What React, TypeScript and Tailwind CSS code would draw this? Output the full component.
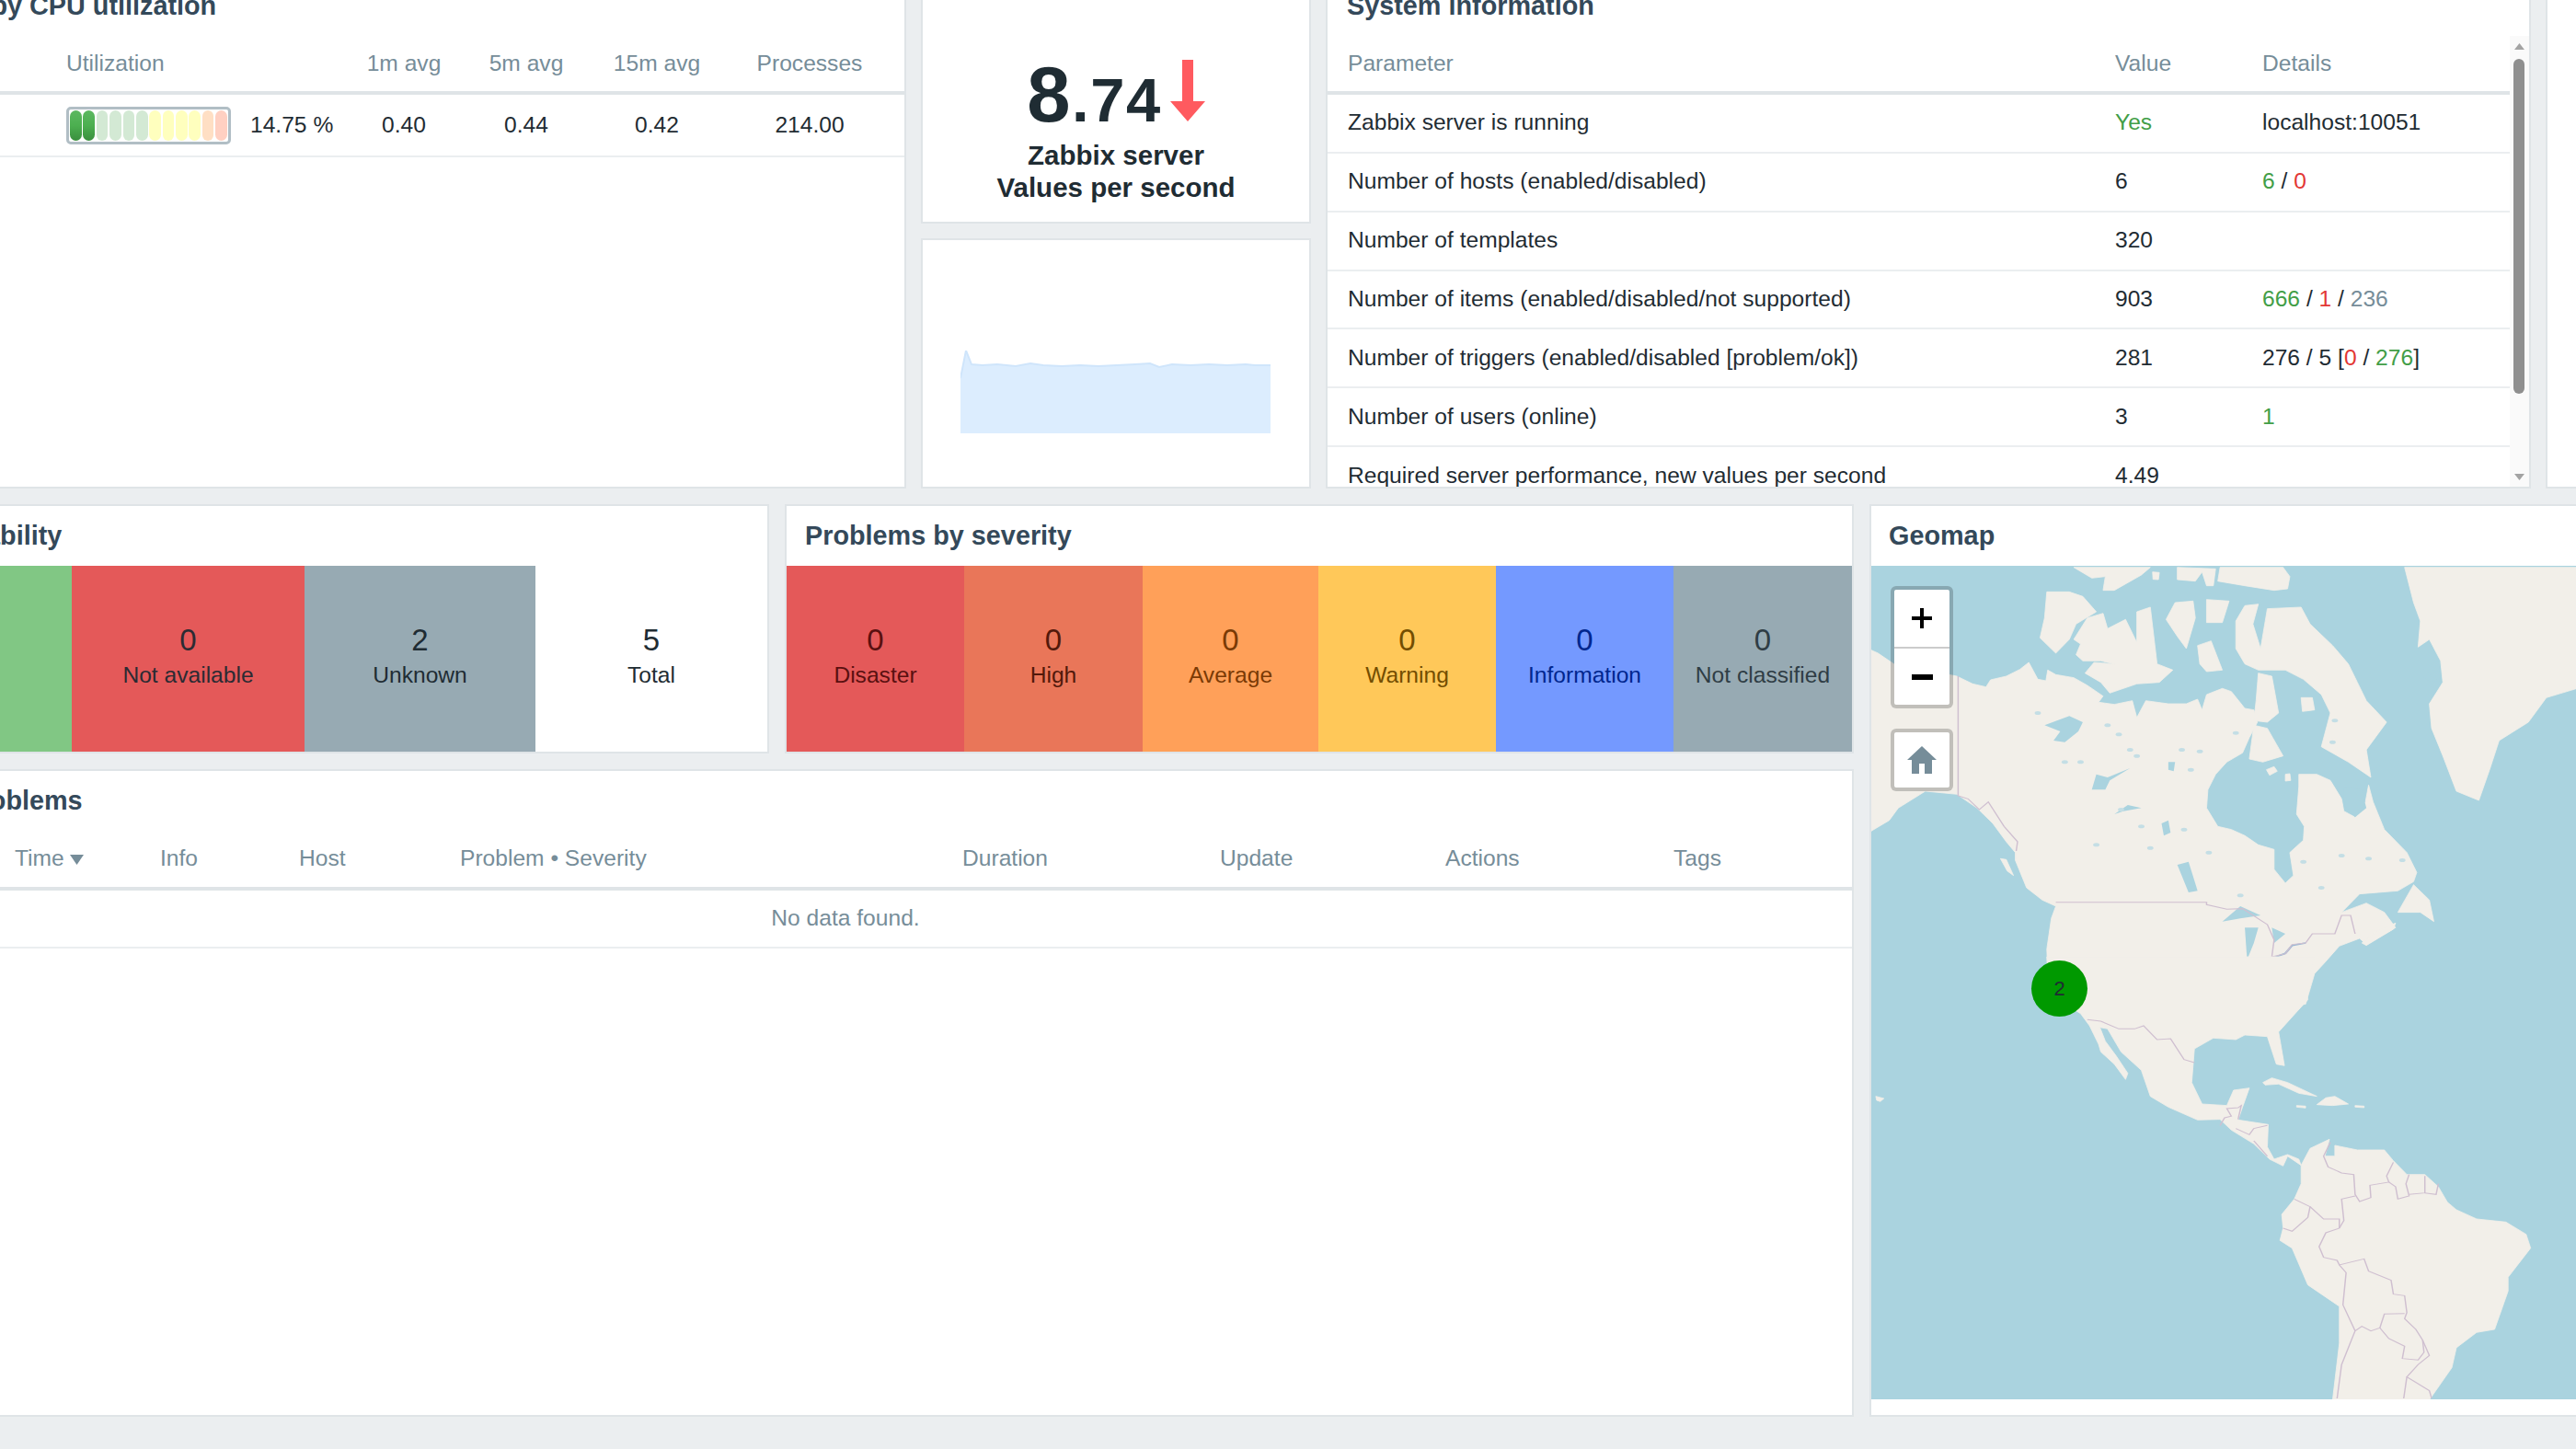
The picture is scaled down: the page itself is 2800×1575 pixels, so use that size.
const font = "font-['Liberation_Sans','Arial',sans-serif]";

function Panel({ className = "", children }: { className?: string; children?: React.ReactNode }) {
  return <div className={`bg-white border-2 border-[#dfe4e7] shrink-0 ${className}`}>{children}</div>;
}

function Title({ children, className = "pl-[20px]" }: { children: React.ReactNode; className?: string }) {
  return (
    <div className={`h-[65px] flex items-center text-[28.8px] font-bold text-[#34495a] whitespace-nowrap ${className}`}>
      {children}
    </div>
  );
}

const barColors = [
  "bg-linear-to-b from-[#5cb860] via-[#4caf50] to-[#3a8f3e]",
  "bg-linear-to-b from-[#5cb860] via-[#4caf50] to-[#3a8f3e]",
  "bg-[#d3e9d4]", "bg-[#d3e9d4]", "bg-[#d3e9d4]", "bg-[#d3e9d4]",
  "bg-[#ffffbe]", "bg-[#ffffbe]", "bg-[#ffffbe]", "bg-[#ffffbe]", "bg-[#ffdfc4]", "bg-[#ffd0c2]",
];

function TopHosts() {
  return (
    <Panel className="w-[1165px] h-full overflow-hidden">
      <Title className="pl-[25px]">Top hosts by CPU utilization</Title>
      <div className="h-[64px] flex items-center text-[#768d99] text-[24.6px] border-b-4 border-[#dfe4e7]">
        <div className="w-[250px] shrink-0" />
        <div className="w-[318px] shrink-0">Utilization</div>
        <div className="w-[98px] shrink-0 text-center">1m avg</div>
        <div className="w-[168px] shrink-0 text-center">5m avg</div>
        <div className="w-[116px] shrink-0 text-center">15m avg</div>
        <div className="w-[216px] shrink-0 text-center">Processes</div>
      </div>
      <div className="h-[68px] flex items-center text-[#1f2c33] text-[24.6px] border-b-2 border-[#ebeef0]">
        <div className="w-[250px] shrink-0" />
        <div className="w-[318px] shrink-0 flex items-center">
          <div className="w-[179px] h-[41px] border-[3px] border-[#b1bec5] rounded-[5px] flex items-center gap-[1.7px] pl-[1px]">
            {barColors.map((c, i) => (
              <div key={i} className={`w-[12.7px] h-[33px] rounded-full ${c}`} />
            ))}
          </div>
          <span className="ml-[21px] whitespace-nowrap">14.75 %</span>
        </div>
        <div className="w-[98px] shrink-0 text-center">0.40</div>
        <div className="w-[168px] shrink-0 text-center">0.44</div>
        <div className="w-[116px] shrink-0 text-center">0.42</div>
        <div className="w-[216px] shrink-0 text-center">214.00</div>
      </div>
    </Panel>
  );
}

function ValueCol() {
  return (
    <div className="w-[424px] h-full shrink-0 flex flex-col gap-[16px]">
      <Panel className="h-[271px] flex flex-col justify-end items-center pb-[20px] text-[#1f2c33]">
        <div className="flex items-baseline font-bold leading-none mb-[6px] tracking-[1.5px]">
          <span className="text-[85px]">8</span>
          <span className="text-[67px]">.74</span>
          <svg className="ml-[9px] self-end mb-[13px]" width="38" height="67" viewBox="0 0 38 67">
            <path d="M13 0H25V45H38L19 67L0 45H13Z" fill="#ff5a5f" />
          </svg>
        </div>
        <div className="text-[29.5px] font-bold leading-[35px] text-center">
          Zabbix server
          <br />
          Values per second
        </div>
      </Panel>
      <Panel className="flex-1 flex items-end justify-center pb-[58px]">
        <svg className="ml-[-1px]" width="337" height="90" viewBox="0 0 337 90">
          <path
            d="M0 30L6 0L12 15L24 16L40 15L50 16L60 17L76 14L90 16L110 17L130 16L150 17L170 16L190 15L206 14L216 18L230 15L250 16L270 15L290 16L310 15L320 16L337 16V90H0Z"
            fill="#dcedfe"
          />
          <path
            d="M0 30L6 0L12 15L24 16L40 15L50 16L60 17L76 14L90 16L110 17L130 16L150 17L170 16L190 15L206 14L216 18L230 15L250 16L270 15L290 16L310 15L320 16L337 16"
            fill="none"
            stroke="#cfe5fb"
            strokeWidth="2"
          />
        </svg>
      </Panel>
    </div>
  );
}

const sysRows: { p: string; v: React.ReactNode; d?: React.ReactNode }[] = [
  { p: "Zabbix server is running", v: <span className="text-[#429e47]">Yes</span>, d: "localhost:10051" },
  {
    p: "Number of hosts (enabled/disabled)",
    v: "6",
    d: (
      <>
        <span className="text-[#429e47]">6</span> / <span className="text-[#e33734]">0</span>
      </>
    ),
  },
  { p: "Number of templates", v: "320" },
  {
    p: "Number of items (enabled/disabled/not supported)",
    v: "903",
    d: (
      <>
        <span className="text-[#429e47]">666</span> / <span className="text-[#e33734]">1</span> /{" "}
        <span className="text-[#768d99]">236</span>
      </>
    ),
  },
  {
    p: "Number of triggers (enabled/disabled [problem/ok])",
    v: "281",
    d: (
      <>
        276 / 5 [<span className="text-[#e33734]">0</span> / <span className="text-[#429e47]">276</span>]
      </>
    ),
  },
  { p: "Number of users (online)", v: "3", d: <span className="text-[#429e47]">1</span> },
  { p: "Required server performance, new values per second", v: "4.49" },
];

function SystemInfo() {
  return (
    <Panel className="w-[1310px] h-full overflow-hidden flex flex-col">
      <Title className="pl-[21px]">System information</Title>
      <div className="flex-1 flex min-h-0">
        <div className="flex-1 overflow-hidden">
          <div className="h-[64px] grid grid-cols-[834px_160px_1fr] items-center pl-[22px] text-[#768d99] text-[24.6px] border-b-4 border-[#dfe4e7]">
            <div>Parameter</div>
            <div>Value</div>
            <div>Details</div>
          </div>
          {sysRows.map((r) => (
            <div
              key={r.p}
              className="h-[63.85px] grid grid-cols-[834px_160px_1fr] items-center pl-[22px] text-[#1f2c33] text-[24.6px] whitespace-nowrap border-b-2 border-[#ebeef0]"
            >
              <div>{r.p}</div>
              <div>{r.v}</div>
              <div>{r.d}</div>
            </div>
          ))}
        </div>
        <div className="w-[21px] bg-[#fafafa] flex flex-col items-center pr-[1px]">
          <svg className="mt-[8px]" width="11" height="7" viewBox="0 0 11 7">
            <path d="M5.5 0L11 7H0Z" fill="#a3a3a3" />
          </svg>
          <div className="w-[12px] h-[364px] mt-[10px] rounded-full bg-[#8f8f8f]" />
          <svg className="mt-[87px]" width="11" height="7" viewBox="0 0 11 7">
            <path d="M5.5 7L11 0H0Z" fill="#a3a3a3" />
          </svg>
        </div>
      </div>
    </Panel>
  );
}

function Cell({ n, label, cls, txt }: { n: string; label: string; cls: string; txt: string }) {
  return (
    <div className={`h-full flex flex-col items-center justify-center whitespace-nowrap ${cls} ${txt}`}>
      <div className="text-[33px] leading-[35px]">{n}</div>
      <div className="text-[24.6px] leading-[41px]">{label}</div>
    </div>
  );
}

function Availability() {
  return (
    <Panel className="w-[1016px] h-[271px] overflow-hidden flex flex-col">
      <Title className="pl-[26px]">Host availability</Title>
      <div className="h-[202px] grid grid-cols-[256px_253px_251px_1fr]">
        <Cell n="3" label="Available" cls="bg-[#81c784]" txt="text-[#1f6a3a]" />
        <Cell n="0" label="Not available" cls="bg-[#e45959]" txt="text-[#2b2b33]" />
        <Cell n="2" label="Unknown" cls="bg-[#97aab3]" txt="text-[#1f2c33]" />
        <Cell n="5" label="Total" cls="bg-white" txt="text-[#1f2c33]" />
      </div>
    </Panel>
  );
}

function Severity() {
  return (
    <Panel className="w-[1162px] h-[271px] overflow-hidden flex flex-col">
      <Title>Problems by severity</Title>
      <div className="h-[202px] grid grid-cols-[193px_194px_191px_193px_193px_1fr]">
        <Cell n="0" label="Disaster" cls="bg-[#e45959]" txt="text-[#5a1010]" />
        <Cell n="0" label="High" cls="bg-[#e97659]" txt="text-[#52190b]" />
        <Cell n="0" label="Average" cls="bg-[#ffa059]" txt="text-[#7a3a05]" />
        <Cell n="0" label="Warning" cls="bg-[#ffc859]" txt="text-[#734d00]" />
        <Cell n="0" label="Information" cls="bg-[#7499ff]" txt="text-[#00268e]" />
        <Cell n="0" label="Not classified" cls="bg-[#97aab3]" txt="text-[#2f3d45]" />
      </div>
    </Panel>
  );
}

function Problems() {
  return (
    <Panel className="flex-1 overflow-hidden">
      <Title className="pl-[26px]">Current problems</Title>
      <div className="h-[65px] flex items-center text-[#768d99] text-[24.6px] whitespace-nowrap border-b-4 border-[#dfe4e7]">
        <div className="w-[194px] shrink-0" />
        <div className="w-[158px] shrink-0 flex items-center">
          Time
          <svg className="ml-[6px] mt-[3px]" width="15" height="11" viewBox="0 0 15 11">
            <path d="M0 0H15L7.5 11Z" fill="#768d99" />
          </svg>
        </div>
        <div className="w-[151px] shrink-0">Info</div>
        <div className="w-[175px] shrink-0">Host</div>
        <div className="w-[546px] shrink-0">Problem • Severity</div>
        <div className="w-[280px] shrink-0">Duration</div>
        <div className="w-[245px] shrink-0">Update</div>
        <div className="w-[248px] shrink-0">Actions</div>
        <div>Tags</div>
      </div>
      <div className="h-[63px] flex items-center justify-center pl-[3px] text-[#768d99] text-[24.6px] border-b-2 border-[#ebeef0]">
        No data found.
      </div>
    </Panel>
  );
}

const north = [
  "M0 275L15 285L40 310L50 320L190 360L225 385L255 395L265 372L300 360L330 338L350 315L370 370L388 375L392 340L410 355L450 365L480 390L515 425L505 445L540 452L580 440L590 495L610 440L660 450L700 450L725 435L735 470L745 420L780 400L800 410L830 465L850 470L858 510L840 560L825 610L790 640L765 680L748 730L745 790L770 850L800 860L830 880L860 910L895 925L895 990L920 1035L938 1010L930 935L960 895L962 850L945 810L950 720L950 680L990 680L1020 700L1045 760L1050 800L1075 820L1098 770L1105 715L1115 770L1140 860L1190 935L1212 1000L1205 1030L1170 1060L1085 1070L1045 1130L1100 1100L1140 1130L1165 1180L1100 1235L1085 1215L1040 1240L1010 1290L985 1330L965 1430L395 1430L390 1250L400 1150L410 1110L380 1090L345 1050L320 960L320 935L300 900L270 840L235 790L190 745L120 735L60 790L40 830L0 865Z",
  "M450 5L490 40L520 35L515 80L540 80L600 30L620 5Z",
  "M625 20L640 22L638 45L626 44Z",
  "M680 5L680 45L720 50L735 20L745 65L760 65L765 10Z",
  "M775 5L770 50L830 65L895 80L925 75L930 35L915 5Z",
  "M1185 5L1205 120L1220 180L1215 265L1240 240L1265 310L1270 380L1240 450L1245 530L1270 620L1300 735L1350 765L1375 660L1395 570L1460 510L1500 430L1568 400V5Z",
  "M390 85L440 85L470 100L500 150L455 190L440 240L410 285L375 235L385 170Z",
  "M455 290L465 255L450 240L480 170L515 155L525 205L565 175L590 250L590 150L620 135L635 320L670 340L640 380L590 385L530 415L510 380L475 350L495 315L540 320L510 310L470 310Z",
  "M655 175L675 120L715 115L720 170L700 270L680 230Z",
  "M725 260L755 245L780 340L745 345L730 320Z",
  "M745 110L795 115L780 185L745 185Z",
  "M810 180L830 130L860 125L848 190L865 270L880 140L955 135L975 190L1025 260L1060 320L1080 380L1100 440L1145 510L1100 600L1110 690L1060 640L1000 590L1020 480L1000 420L960 370L920 340L860 340L830 320L810 270Z",
  "M860 350L890 360L905 480L880 510L850 505L855 440Z",
  "M850 520L880 530L915 620L870 640L840 630Z",
  "M878 665L895 655L902 670L885 683Z",
  "M920 680L930 678L932 700L920 702Z",
  "M955 430L980 430L985 470L958 475Z",
  "M1170 1130L1205 1040L1240 1090L1250 1160L1220 1130Z",
  "M287 955L300 958L316 1010L302 995Z",
  "M1090 1230L1125 1190L1165 1165L1160 1185L1100 1238Z",
];
const northWater = [
  "M385 520L440 490L470 510L460 540L430 575L405 570L420 540Z",
  "M490 730L500 680L525 690L575 660L530 700L520 730Z",
  "M680 975L705 965L725 1060L705 1065Z",
  "M540 810L570 780L600 790L560 800Z",
  "M780 1160L820 1110L865 1140L820 1150Z",
  "M830 1180L860 1180L850 1230L835 1285Z",
  "M890 1180L920 1200L895 1230Z",
  "M1225 335L1260 375L1240 378L1225 360Z",
  "M645 840L660 830L665 870L650 880Z",
  "M660 640L675 640L672 670L660 665Z",
  "M1050 720L1090 730L1100 790L1075 820L1050 780Z",
];
const northLakes: [number, number][] = [
  [525, 520], [550, 550], [575, 600], [465, 640], [690, 600], [730, 605], [710, 665], [555, 795], [600, 850],
  [695, 860], [620, 920], [500, 910], [750, 935], [820, 1075], [1045, 945], [1105, 955], [960, 965], [1180, 960],
  [1000, 1050], [1030, 505], [1025, 575], [810, 545], [370, 480], [590, 620], [430, 640],
];
const northBorders = [
  "M193 360V750L215 760L240 795L260 770L295 850L325 900L322 930",
  "M410 1097H745V1105L790 1120L825 1118L880 1170L895 1220L890 1275L920 1265L935 1235L965 1230L980 1200L1030 1200L1045 1140L1065 1140L1075 1200",
];
const south = [
  "M390 -60L395 60L465 125L485 165L505 225L510 250L540 290L565 340L570 320L545 265L520 215L508 170L525 175L555 250L600 310L620 395L660 430L725 472L775 470L800 505L850 550L885 600L915 622L925 590L955 620L950 600L925 585L895 600L880 560L882 487L815 472L825 430L840 368L805 375L790 425L735 420L712 350L718 240L760 205L810 210L830 195L880 200L900 290L918 295L905 185L945 120L970 80L965 40L985 -60Z",
  "M870 350L890 335L925 350L990 395L950 385L905 355L875 358Z",
  "M1010 400L1030 395L1060 420L1025 425L990 422Z",
  "M945 425L965 427L965 433L945 430Z",
  "M1075 425L1095 427L1095 432L1075 430Z",
  "M10 395L28 402L20 412L12 408Z",
  "M955 620L975 565L1018 535L1008 590L1030 590L1030 555L1080 570L1140 570L1160 605L1190 650L1230 650L1260 690L1280 740L1300 765L1345 795L1410 805L1455 845L1465 890L1415 985L1415 1030L1385 1155L1345 1165L1300 1215L1290 1280L1240 1385L1025 1385L1040 1200L1040 1080L970 1010L935 890L908 865L915 825L912 780L940 730L955 680Z",
];
const southBorders = [
  "M480 145L510 150L550 175L585 175L605 165L635 210L665 207L695 275L718 285",
  "M775 490L785 465L800 460L790 435L815 432L822 425L815 470",
  "M810 500L840 520L850 500L880 490",
  "M850 540L880 590",
  "M1020 545L1005 590L1015 625L1045 645L1072 650L1075 715L1085 738L1110 725L1108 685L1150 675L1145 655L1160 610",
  "M1150 675L1165 690L1170 730L1195 720L1188 680L1195 650",
  "M1195 715L1230 710L1230 655",
  "M1230 710L1255 715L1260 680",
  "M1075 720L1045 730L1050 800L1040 825L1010 840L995 885L1005 920L1035 930L1040 945L1095 925L1105 965L1155 995L1160 1040L1185 1045L1190 1100L1185 1120L1210 1155L1225 1190L1240 1240L1215 1270L1190 1310L1240 1355L1245 1380",
  "M940 730L975 755L970 790L935 835L915 825",
  "M975 755L1005 795L1040 795L1040 825",
  "M1040 945L1055 970L1048 1075L1075 1160L1045 1270L1035 1380",
  "M1075 1160L1090 1145L1110 1160L1130 1150L1150 1185L1185 1210L1180 1250L1215 1255L1228 1230L1225 1190",
  "M1130 1150L1140 1105L1185 1103",
  "M1190 1310L1183 1380",
];

function MapArt() {
  return (
    <svg className="block w-full h-full" width="767" height="906" viewBox="0 0 767 906" preserveAspectRatio="none">
      <rect width="767" height="906" fill="#aad3df" />
      <g transform="scale(0.4892 0.3333)">
        {north.map((d, i) => (
          <path key={i} d={d} fill="#f2efe9" stroke="#f2efe9" strokeWidth="2" strokeLinejoin="round" />
        ))}
        {northWater.map((d, i) => (
          <path key={i} d={d} fill="#aad3df" strokeLinejoin="round" />
        ))}
        {northLakes.map(([x, y]) => (
          <ellipse key={`${x}-${y}`} cx={x} cy={y} rx="7" ry="6" fill="#c4dee5" />
        ))}
        <path d="M890 1280L920 1264L935 1238L965 1230" fill="none" stroke="#9db9d4" strokeWidth="5" />
        {northBorders.map((d, i) => (
          <path key={i} d={d} fill="none" stroke="#cfbfd0" strokeWidth="3" />
        ))}
      </g>
      <g transform="translate(0 445) scale(0.4892 0.3333)">
        {south.map((d, i) => (
          <path key={i} d={d} fill="#f2efe9" stroke="#f2efe9" strokeWidth="2" strokeLinejoin="round" />
        ))}
        {southBorders.map((d, i) => (
          <path key={i} d={d} fill="none" stroke="#cfbfd0" strokeWidth="3" />
        ))}
      </g>
    </svg>
  );
}

function Geomap() {
  return (
    <Panel className="w-[800px] h-full overflow-hidden flex flex-col">
      <Title className="pl-[19px]">Geomap</Title>
      <div className="relative h-[906px] w-[767px]">
        <MapArt />
        <div className="absolute left-[21px] top-[22px] w-[68px] h-[133px] border-[4px] border-[#00000033] rounded-[6px] bg-white bg-clip-padding flex flex-col text-black">
          <div className="h-[64px] flex items-center justify-center border-b-2 border-[#cccccc]">
            <svg width="24" height="24" viewBox="0 0 24 24">
              <path d="M10 1H14V10H23V14H14V23H10V14H1V10H10Z" fill="#000" />
            </svg>
          </div>
          <div className="flex-1 flex items-center justify-center">
            <svg width="23" height="6" viewBox="0 0 23 6">
              <rect width="23" height="6" fill="#000" />
            </svg>
          </div>
        </div>
        <div className="absolute left-[21px] top-[177px] w-[68px] h-[68px] border-[4px] border-[#00000033] rounded-[6px] bg-white bg-clip-padding flex items-center justify-center">
          <svg width="32" height="30" viewBox="0 0 32 30">
            <path d="M16 0L32 15H27V30H19V19H13V30H5V15H0Z" fill="#768d99" />
          </svg>
        </div>
        <div className="absolute left-[174px] top-[429px] w-[61px] h-[61px] rounded-full bg-[#009900] flex items-center justify-center text-[22px] text-[#1f2c33]">
          2
        </div>
      </div>
    </Panel>
  );
}

export default function App() {
  return (
    <div className={`w-[2800px] h-[1575px] overflow-hidden bg-[#ebeef0] ${font}`}>
      <div className="w-[3400px] -ml-[180px] -mt-[28px] flex flex-col gap-[17px]">
        <div className="h-[559px] flex gap-[16px]">
          <TopHosts />
          <ValueCol />
          <SystemInfo />
          <Panel className="w-[300px] h-full" />
        </div>
        <div className="h-[992px] flex gap-[17px]">
          <div className="w-[2195px] h-full shrink-0 flex flex-col gap-[17px]">
            <div className="flex gap-[17px]">
              <Availability />
              <Severity />
            </div>
            <Problems />
          </div>
          <Geomap />
        </div>
      </div>
    </div>
  );
}
